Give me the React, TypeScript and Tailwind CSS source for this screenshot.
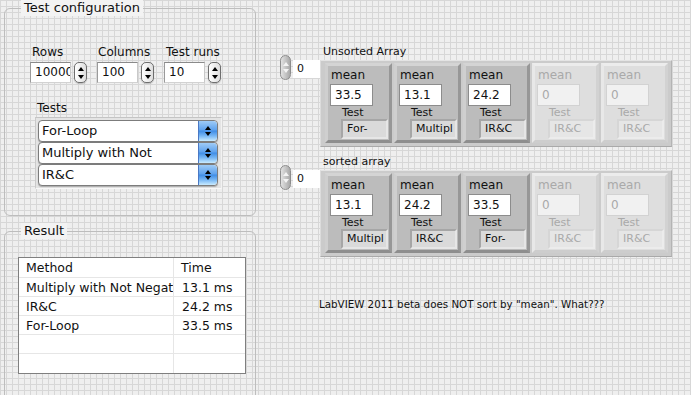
import React from 'react';

// LabVIEW front panel: test configuration, result table and two cluster arrays

type Item = { mean: string; test: string; disabled?: boolean };

const unsorted: Item[] = [
  { mean: '33.5', test: 'For-' },
  { mean: '13.1', test: 'Multipl' },
  { mean: '24.2', test: 'IR&C' },
  { mean: '0', test: 'IR&C', disabled: true },
  { mean: '0', test: 'IR&C', disabled: true },
];

const sorted: Item[] = [
  { mean: '13.1', test: 'Multipl' },
  { mean: '24.2', test: 'IR&C' },
  { mean: '33.5', test: 'For-' },
  { mean: '0', test: 'IR&C', disabled: true },
  { mean: '0', test: 'IR&C', disabled: true },
];

const results = [
  { method: 'Multiply with Not Negate', time: '13.1 ms' },
  { method: 'IR&C', time: '24.2 ms' },
  { method: 'For-Loop', time: '33.5 ms' },
  { method: '', time: '' },
  { method: '', time: '' },
];

function Up({ color = 'border-b-black' }: { color?: string }) {
  return <span className={`block h-0 w-0 border-x-[3px] border-b-[4px] border-x-transparent ${color}`} />;
}

function Down({ color = 'border-t-black' }: { color?: string }) {
  return <span className={`block h-0 w-0 border-x-[3px] border-t-[4px] border-x-transparent ${color}`} />;
}

function Spin() {
  return (
    <div className="flex h-[21px] w-[13px] flex-col items-center justify-center gap-[4px] rounded-[5px] border border-[#6e6e6e] bg-[linear-gradient(to_right,#ffffff,#dedede)] shadow-[0_1px_1px_rgba(0,0,0,0.2)]">
      <Up />
      <Down />
    </div>
  );
}

function NumField({ label, value, labelPad }: { label: string; value: string; labelPad: string }) {
  return (
    <div className="flex flex-col">
      <span className={`text-[12px] leading-[14px] text-[#111] ${labelPad}`}>{label}</span>
      <div className="mt-[3px] flex items-start gap-[3px]">
        <div className="h-[21px] w-[41px] overflow-hidden whitespace-nowrap border border-t-[#8a8a8a] border-l-[#9a9a9a] border-r-[#c9c9c9] border-b-[#d2d2d2] bg-white pl-[4px] text-[12px] leading-[19px]">
          {value}
        </div>
        <Spin />
      </div>
    </div>
  );
}

function Ring({ text }: { text: string }) {
  return (
    <div className="flex h-[22px] w-[180px] items-stretch rounded-[4px] border border-[#7c7c7c] bg-white shadow-[0_1px_1px_rgba(0,0,0,0.25)]">
      <span className="flex-1 pl-[3px] text-[13px] leading-[20px] text-[#111]">{text}</span>
      <span className="flex w-[19px] flex-col items-center justify-center gap-[2px] rounded-r-[4px] border-l border-[#4a78c4] bg-[linear-gradient(to_bottom,#9fcbf6,#5ea2ee_45%,#3f8de6_50%,#79b8f5_75%,#c9ebff)]">
        <Up />
        <Down />
      </span>
    </div>
  );
}

function IndexSpin() {
  return (
    <div className="flex h-[25px] w-[11px] flex-col items-center justify-center gap-[3px] rounded-full border border-[#8d8d8d] bg-[linear-gradient(to_right,#e2e2e2,#a9a9a9)]">
      <Up color="border-b-[#f4f4f4]" />
      <Down color="border-t-[#f4f4f4]" />
    </div>
  );
}

function Cluster({ item }: { item: Item }) {
  const off = item.disabled;
  return (
    <div
      className={`flex h-[80px] w-[67px] flex-col border-[3px] pl-[3px] pt-[2px] ${
        off
          ? 'border-t-[#ececec] border-l-[#e8e8e8] border-b-[#cdcdcd] border-r-[#d2d2d2] bg-[#dedede] text-[#a9a9a9]'
          : 'border-t-[#d4d4d4] border-l-[#cfcfcf] border-b-[#8e8e8e] border-r-[#979797] bg-[#bcbcbc] text-[#111]'
      }`}
    >
      <span className="text-[12px] leading-[14px]">mean</span>
      <div
        className={`ml-[-1px] mt-[2px] h-[22px] w-[43px] border pl-[4px] text-[12px] leading-[20px] ${
          off ? 'border-[#d2d2d2] bg-[#f1f1f1]' : 'border-[#8c8c8c] bg-white'
        }`}
      >
        {item.mean}
      </div>
      <span className="ml-[11px] text-[11px] leading-[13px]">Test</span>
      <div
        className={`ml-[10px] h-[20px] w-[47px] overflow-hidden whitespace-nowrap border-2 pl-[4px] text-[11px] leading-[16px] ${
          off
            ? 'border-t-[#d6d6d6] border-l-[#d6d6d6] border-b-[#ececec] border-r-[#ececec] bg-[#e6e6e6]'
            : 'border-t-[#a6a6a6] border-l-[#a6a6a6] border-b-[#e6e6e6] border-r-[#e6e6e6] bg-[#dadada]'
        }`}
      >
        {item.test}
      </div>
    </div>
  );
}

function ArrayBlock({ label, items, className = '' }: { label: string; items: Item[]; className?: string }) {
  return (
    <div className={`flex flex-col ${className}`}>
      <span className="pl-[43px] text-[11px] leading-[13px] text-[#111]">{label}</span>
      <div className="flex items-start">
        <div className="mt-[-3px]">
          <IndexSpin />
        </div>
        <div className="ml-[2px] mt-[2px] h-[18px] w-[27px] bg-white pl-[4px] text-[11px] leading-[18px] text-[#111]">0</div>
        <div className="mt-[2px] flex h-[87px] w-[352px] gap-[2px] border border-t-[#e4e4e4] border-l-[#dcdcdc] border-b-[#a9a9a9] border-r-[#b4b4b4] bg-[#cbcbcb] pl-[4px] pt-[2px]">
          {items.map((it, i) => (
            <Cluster key={i} item={it} />
          ))}
        </div>
      </div>
    </div>
  );
}

export default function App() {
  return (
    <div className="flex h-[395px] w-[691px] overflow-hidden bg-[#efefef] bg-[linear-gradient(to_right,#d7d7d7_1px,transparent_1px),linear-gradient(to_bottom,#d7d7d7_1px,transparent_1px)] bg-[size:6px_6px] font-['DejaVu_Sans',sans-serif] text-[#111]">
      {/* left column */}
      <div className="ml-[4px] flex w-[252px] flex-col">
        <fieldset className="h-[216px] shrink-0 rounded-[6px] border border-[#bdbdbd] px-0 pb-0 pt-[29px]">
          <legend className="ml-[16px] bg-[#f3f3f3] px-[3px] text-[13px] leading-[16px]">Test configuration</legend>
          <div className="ml-[25px] flex gap-[10px]">
            <NumField label="Rows" value="10000" labelPad="pl-[2px]" />
            <NumField label="Columns" value="100" labelPad="pl-[1px]" />
            <NumField label="Test runs" value="10" labelPad="pl-[2px]" />
          </div>
          <span className="ml-[32px] mt-[18px] block text-[12px] leading-[14px]">Tests</span>
          <div className="ml-[30px] mt-[2px] flex w-[187px] flex-col border border-t-[#c4c4c4] border-l-[#cacaca] border-b-[#f8f8f8] border-r-[#f2f2f2] bg-[#e4e4e4] py-[2px] pl-[2px]">
            <Ring text="For-Loop" />
            <Ring text="Multiply with Not" />
            <Ring text="IR&C" />
          </div>
        </fieldset>

        <fieldset className="mt-[7px] h-[200px] shrink-0 rounded-[6px] border border-[#bdbdbd] p-0">
          <legend className="ml-[16px] bg-[#f3f3f3] px-[3px] text-[13px] leading-[16px]">Result</legend>
          <div className="ml-[13px] mt-[18px] w-[228px] border border-[#7f7f7f] bg-white">
            <div className="flex h-[20px] border-b border-[#e6e6e6] text-[12.5px] leading-[19px]">
              <span className="w-[155px] border-r border-[#e6e6e6] pl-[7px]">Method</span>
              <span className="pl-[7px]">Time</span>
            </div>
            {results.map((r, i) => (
              <div key={i} className="flex h-[19px] border-b border-[#e6e6e6] text-[12.5px] leading-[19px] last:border-b-0">
                <span className="w-[155px] overflow-hidden whitespace-nowrap border-r border-[#e6e6e6] pl-[7px]">{r.method}</span>
                <span className="pl-[8px]">{r.time}</span>
              </div>
            ))}
          </div>
        </fieldset>
      </div>

      {/* right column */}
      <div className="ml-[24px] flex flex-col pt-[45px]">
        <ArrayBlock label="Unsorted Array" items={unsorted} />
        <ArrayBlock label="sorted array" items={sorted} className="mt-[8px]" />
        <p className="mt-[41px] pl-[39px] text-[10.3px] leading-[13px] text-[#111]">
          LabVIEW 2011 beta does NOT sort by "mean". What???
        </p>
      </div>
    </div>
  );
}
